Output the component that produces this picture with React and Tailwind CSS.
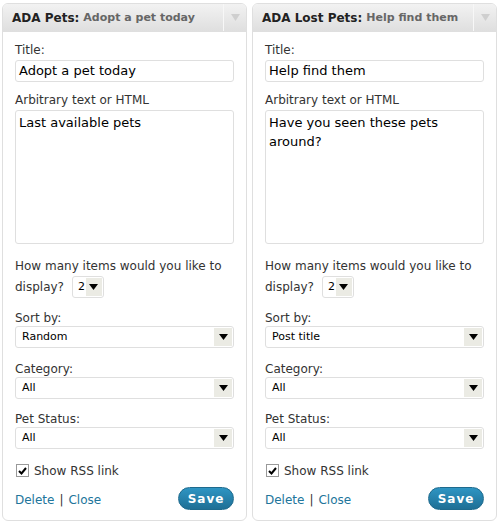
import React from "react";

const FONT = { fontFamily: '"DejaVu Sans", Verdana, sans-serif' };

function Arrow() {
  return (
    <svg width="9" height="6" viewBox="0 0 9 6">
      <polygon points="0,0 9,0 4.5,6" fill="#000" />
    </svg>
  );
}

function Select({ value }) {
  return (
    <div className="flex h-[22px] w-full items-center rounded-[3px] border border-[#dfdfdf] bg-white pl-[6px] pr-[1px]">
      <span className="flex-1 text-[11px] text-black">{value}</span>
      <span className="flex h-[18px] w-[18px] items-center justify-center bg-[#ebebe4]">
        <Arrow />
      </span>
    </div>
  );
}

function Label({ children }) {
  return <div className="text-[12px] leading-[16px] text-[#333]">{children}</div>;
}

function Widget({ name, subtitle, title, text, sort }) {
  return (
    <div className="flex flex-col overflow-hidden rounded-[6px] border border-[#dfdfdf] bg-white">
      <div className="flex h-[28px] items-stretch border-b border-[#dfdfdf] bg-gradient-to-b from-[#f2f2f2] to-[#dfdfdf]">
        <div className="flex flex-1 items-center whitespace-nowrap pl-[9px] pt-[1px] text-[12px] font-bold text-[#222]">
          {name}:
          <span className="ml-[4px] text-[11px] text-[#666]">{subtitle}</span>
        </div>
        <div className="flex w-[23px] items-center justify-center border-l border-[#f7f7f7]">
          <svg width="9" height="7" viewBox="0 0 9 7">
            <polygon points="0,0 9,0 4.5,7" fill="#cfcfcf" />
          </svg>
        </div>
      </div>

      <div className="flex flex-col px-[12px] pt-[10px] pb-[10px]">
        <Label>Title:</Label>
        <div className="mt-[2px] flex h-[22px] items-center rounded-[3px] border border-[#dfdfdf] px-[3px] text-[13px] text-black">
          {title}
        </div>

        <div className="mt-[10px]">
          <Label>Arbitrary text or HTML</Label>
        </div>
        <div className="mt-[2px] h-[134px] rounded-[3px] border border-[#dfdfdf] px-[3px] pt-[2px] text-[13px] leading-[19px] text-black">
          {text}
        </div>

        <div className="mt-[12px] text-[12px] leading-[20px] text-[#333]">
          <div>How many items would you like to</div>
          <div className="flex h-[22px] items-center">
            display?
            <span className="ml-[8px] flex h-[22px] items-center rounded-[3px] border border-[#dfdfdf] bg-white pl-[5px] pr-[1px]">
              <span className="text-[11px] text-black">2</span>
              <span className="ml-[1px] flex h-[18px] w-[16px] items-center justify-center bg-[#ebebe4]">
                <Arrow />
              </span>
            </span>
          </div>
        </div>

        <div className="mt-[12px]">
          <Label>Sort by:</Label>
        </div>
        <Select value={sort} />

        <div className="mt-[13px]">
          <Label>Category:</Label>
        </div>
        <Select value="All" />

        <div className="mt-[12px]">
          <Label>Pet Status:</Label>
        </div>
        <Select value="All" />

        <label className="mt-[15px] flex h-[13px] items-center pl-[1px] text-[12px] text-[#333]">
          <span className="flex h-[13px] w-[13px] items-center justify-center border border-[#999] bg-white">
            <svg width="9" height="8" viewBox="0 0 9 8">
              <path d="M1 4 L3.5 6.5 L8 1" fill="none" stroke="#000" strokeWidth="2" />
            </svg>
          </span>
          <span className="ml-[5px]">Show RSS link</span>
        </label>

        <div className="mt-[10px] flex items-center justify-between">
          <div className="mt-[3px] text-[12px] text-[#21759b]">
            <span>Delete</span>
            <span className="mx-[5px] text-[#333]">|</span>
            <span>Close</span>
          </div>
          <button className="h-[23px] w-[56px] rounded-full border border-[#1e6a8d] bg-gradient-to-b from-[#2e95c3] to-[#1f6f95] text-[12px] font-bold tracking-[1px] text-white">
            Save
          </button>
        </div>
      </div>
    </div>
  );
}

export default function App() {
  return (
    <div className="h-[526px] w-[500px] bg-white" style={FONT}>
      <div className="grid grid-cols-2 gap-[5px] pl-[2px] pr-[3px] pt-[3px]">
        <Widget
          name="ADA Pets"
          subtitle="Adopt a pet today"
          title="Adopt a pet today"
          text="Last available pets"
          sort="Random"
        />
        <Widget
          name="ADA Lost Pets"
          subtitle="Help find them"
          title="Help find them"
          text="Have you seen these pets around?"
          sort="Post title"
        />
      </div>
    </div>
  );
}
